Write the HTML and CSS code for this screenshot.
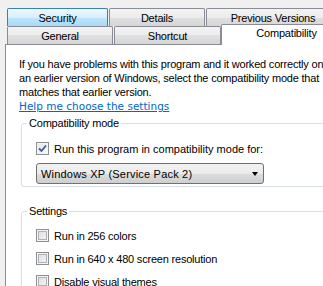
FILE: index.html
```html
<!DOCTYPE html>
<html>
<head>
<meta charset="utf-8">
<link rel="stylesheet" href="styles.css">
</head>
<body>
<div class="dialog">
  <div class="tabrow row1">
    <div class="tab hover w-security">Security</div>
    <div class="tab w-details">Details</div>
    <div class="tab w-prev">Previous Versions</div>
  </div>
  <div class="tabrow row2">
    <div class="tab w-general">General</div>
    <div class="tab w-shortcut">Shortcut</div>
    <div class="tab selected w-compat">Compatibility</div>
  </div>
  <div class="panel">
    <p class="intro">If you have problems with this program and it worked correctly on<br>an earlier version of Windows, select the compatibility mode that<br>matches that earlier version.</p>
    <a class="link" href="#">Help me choose the settings</a>
    <fieldset class="group g1">
      <legend>Compatibility mode</legend>
      <label class="check-row first">
        <span class="cb checked"><svg width="9" height="9" viewBox="0 0 9 9"><path d="M1 4.5 L3.5 7 L8 1.5" fill="none" stroke="#3f5a96" stroke-width="1.8"/></svg></span>
        <span>Run this program in compatibility mode for:</span>
      </label>
      <div class="combo">
        <span>Windows XP (Service Pack 2)</span>
        <span class="arrow"></span>
      </div>
    </fieldset>
    <fieldset class="group g2">
      <legend>Settings</legend>
      <label class="check-row"><span class="cb"></span><span>Run in 256 colors</span></label>
      <label class="check-row"><span class="cb"></span><span>Run in 640 x 480 screen resolution</span></label>
      <label class="check-row"><span class="cb"></span><span>Disable visual themes</span></label>
    </fieldset>
  </div>
</div>
</body>
</html>
```

FILE: styles.css
```css
html, body {
  margin: 0;
  padding: 0;
  background: #f0f0f0;
  overflow: hidden;
  width: 323px;
  height: 286px;
}
.dialog {
  font-family: "Liberation Sans", Arial, sans-serif;
  font-size: 11px;
  letter-spacing: -0.2px;
  color: #000;
  padding-top: 8px;
  width: 400px;
}
.tabrow {
  display: flex;
  height: 18px;
  padding-left: 7px;
  align-items: flex-end;
}
.tab {
  box-sizing: border-box;
  height: 18px;
  border: 1px solid #898c95;
  border-bottom: none;
  background: linear-gradient(#f3f3f3, #ececec 50%, #e0e0e0 50%, #d6d6d6);
  display: flex;
  align-items: center;
  justify-content: center;
  border-radius: 2px 2px 0 0;
  white-space: nowrap;
}
.tab + .tab { margin-left: 1px; }
.tab.hover {
  border-color: #3c7fb1;
  background: linear-gradient(#eaf6fd, #d9f0fc 50%, #bee6fd 50%, #a7d9f5);
}
.w-security { width: 101px; }
.w-details { width: 96px; }
.w-prev { width: 134px; }
.w-general { width: 106px; }
.w-shortcut { width: 107px; }
.w-compat { width: 131px; }
.tab.selected {
  background: #fff;
  height: 21px;
  margin-top: -2px;
  margin-bottom: -1px;
  position: relative;
  z-index: 2;
  align-items: flex-start;
  padding-top: 2px;
  margin-left: 0;
}
.panel {
  box-sizing: border-box;
  margin-left: 5px;
  border: 1px solid #898c95;
  background: #fff;
  height: 260px;
  padding: 12px 0 0 13px;
  position: relative;
  z-index: 1;
}
.intro {
  margin: 0;
  line-height: 14px;
  white-space: nowrap;
}
.link {
  display: block;
  font-family: "DejaVu Sans", Verdana, sans-serif;
  font-size: 10.5px;
  letter-spacing: 0;
  color: #0066cc;
  line-height: 14px;
  text-decoration: underline;
  white-space: nowrap;
}
.group {
  margin: 0 0 0 2px;
  border: 1px solid #d5dfe5;
  border-radius: 3px;
  padding: 0;
  width: 320px;
  box-sizing: border-box;
}
.group legend {
  padding: 0 2px;
  margin-left: 5px;
  line-height: 14px;
}
.g1 { margin-top: 3px; height: 71px; }
.g2 { margin-top: 17px; height: 90px; }
.check-row {
  display: flex;
  align-items: center;
  gap: 5px;
  height: 13px;
  margin-left: 14px;
  white-space: nowrap;
}
.g1 .check-row { margin-top: 12px; letter-spacing: 0; }
.g2 .check-row { margin-top: 10px; }
.g2 .check-row:first-of-type { margin-top: 11px; }
.cb {
  box-sizing: border-box;
  width: 13px;
  height: 13px;
  border: 1px solid #8e8f8f;
  background: linear-gradient(135deg, #dcdcdc, #f6f6f6);
  box-shadow: inset 0 0 0 1px #f4f4f4, inset 0 0 0 2px #aeb3b9;
  display: flex;
  align-items: center;
  justify-content: center;
  flex: none;
}
.cb.checked {
  box-shadow: inset 0 0 0 1px #f4f4f4;
  background: linear-gradient(135deg, #e6e6e6, #fbfbfb);
}
.combo {
  box-sizing: border-box;
  margin: 8px 0 0 14px;
  width: 228px;
  height: 21px;
  border: 1px solid #707070;
  border-radius: 3px;
  background: linear-gradient(#f2f2f2, #ebebeb 50%, #dddddd 50%, #cfcfcf);
  display: flex;
  align-items: center;
  justify-content: space-between;
  padding: 0 5px 0 4px;
  white-space: nowrap;
  letter-spacing: 0.2px;
}
.arrow {
  width: 0;
  height: 0;
  border-left: 3.5px solid transparent;
  border-right: 3.5px solid transparent;
  border-top: 4px solid #000;
}
```
